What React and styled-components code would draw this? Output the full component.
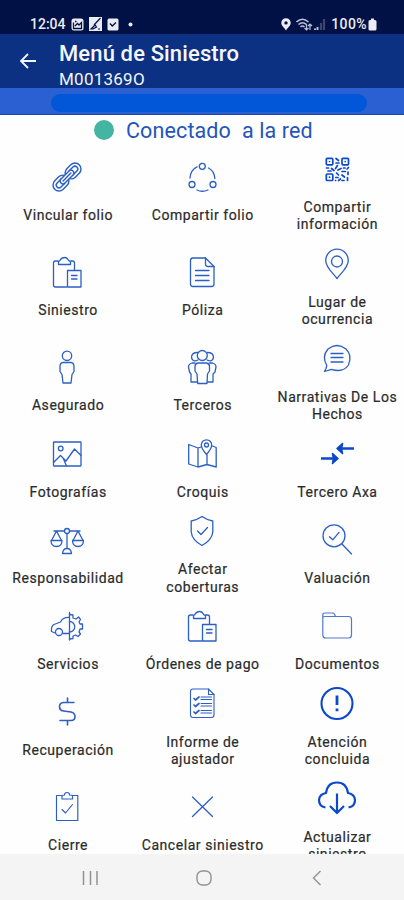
import { styled, createGlobalStyle } from "styled-components";

const GlobalStyle = createGlobalStyle`
    * {
        box-sizing: border-box;
    }
    body {
        margin: 0;
        background-color: white;
        font-family: Roboto, "Liberation Sans", sans-serif;
    }
`

const Screen = styled.div`
    width: 404px;
    height: 900px;
    display: flex;
    flex-direction: column;
    overflow: hidden;
    background-color: #fefefe;
`

const StatusBar = styled.div`
    height: 34px;
    flex-shrink: 0;
    display: flex;
    justify-content: space-between;
    align-items: flex-end;
    padding: 0 27px 2px 30px;
    background-color: #011145;
    color: #e9ecf4;
`

const StatusGroup = styled.div`
    display: flex;
    align-items: center;
    height: 16px;
    gap: ${(props) => props.$gap || '5px'};
`

const StatusText = styled.span`
    font-size: 14px;
    line-height: 16px;
    font-weight: 500;
    letter-spacing: ${(props) => props.$spacing || '0'};
`

const AppBar = styled.header`
    height: 54px;
    flex-shrink: 0;
    display: flex;
    padding-left: 19px;
    background-color: #0c3182;
    color: #f4f6fb;
`

const BackButton = styled.button`
    width: 18px;
    height: 54px;
    padding: 0;
    border: none;
    background: none;
    color: inherit;
    display: flex;
    align-items: center;
`

const Titles = styled.div`
    margin-left: 22px;
    padding-top: 6px;
`

const Title = styled.h1`
    margin: 0;
    font-size: 22px;
    line-height: 27px;
    font-weight: 500;
    letter-spacing: 0.13px;
    white-space: nowrap;
`

const Subtitle = styled.p`
    margin: 0;
    font-size: 17px;
    line-height: 25px;
    letter-spacing: 0.25px;
`

const Strip = styled.div`
    height: 27px;
    flex-shrink: 0;
    padding: 6px 37px 0 51px;
    background-color: #2a60d1;
    border-bottom: 1px solid #1747a8;
`

const StripPill = styled.div`
    height: 18px;
    border-radius: 9px;
    background-color: #0256d8;
`

const Connection = styled.div`
    height: 28px;
    flex-shrink: 0;
    display: flex;
    align-items: center;
    padding: 4px 0 0 94px;
    gap: 12px;
    color: #2455bb;
    font-size: 21.5px;
    line-height: 24px;
    letter-spacing: 0.12px;
    white-space: pre;
`

const Dot = styled.span`
    width: 20px;
    height: 20px;
    margin-top: -2px;
    border-radius: 50%;
    background-color: #45b5a3;
`

const Menu = styled.main`
    flex: 1;
    min-height: 0;
    overflow: hidden;
    display: grid;
    grid-template-columns: repeat(3, 1fr);
    align-content: start;
`

const MenuItem = styled.div`
    display: flex;
    flex-direction: column;
    align-items: center;
    justify-content: center;
    padding: 4.5px 0;
    color: ${(props) => (props.$strong ? '#0c48cb' : '#2c5fc3')};
`

const ItemIcon = styled.svg`
    width: 42px;
    height: 42px;
    overflow: visible;
    fill: none;
    stroke: currentColor;
    stroke-width: 1.3;
    stroke-linecap: round;
    stroke-linejoin: round;
`

const ItemLabel = styled.span`
    margin-top: 9.2px;
    padding-left: 1.5px;
    margin-bottom: -0.2px;
    color: #2b2b2b;
    font-size: 14px;
    line-height: 17.5px;
    letter-spacing: 0.55px;
    -webkit-text-stroke: 0.2px #2b2b2b;
    text-align: center;
    white-space: pre;
`

const NavBar = styled.nav`
    height: 46px;
    flex-shrink: 0;
    display: flex;
    align-items: center;
    justify-content: space-between;
    padding: 2px 82px 0 82px;
    background-color: #f4f4f4;
    color: #929292;
`

const clipboardDoc = (
    <>
        <path d="M12 10H9.500Q7.500 10 7.500 12V34Q7.500 36 9.500 36H20.500M25 10H26.500Q28.500 10 28.500 12V19" />
        <path d="M12.500 13.500V10.500Q14 10 14.500 8.500Q16 6.500 18.500 6.500Q21 6.500 22 8.500Q22.500 10 24.500 10.500V13.500Z" />
        <path d="M21.500 19.500H35V36H21.500ZM25.500 24.500H31M25.500 28H31" />
    </>
)

const icons = {
    link: (
        <g transform="rotate(-45 21 21)" strokeWidth="1.450">
            <rect x="3.700" y="15" width="17.500" height="12" rx="6" />
            <rect x="7" y="18.200" width="10.500" height="5.600" rx="2.800" />
            <rect x="20.800" y="15" width="17.500" height="12" rx="6" />
            <rect x="24.500" y="18.200" width="10.500" height="5.600" rx="2.800" />
            <rect x="12.500" y="18.200" width="17" height="5.600" rx="2.800" fill="#fefefe" />
            <path d="M15.500 21H26.500" />
        </g>
    ),
    share: (
        <>
            <circle cx="21.300" cy="10.300" r="3" />
            <circle cx="11" cy="28.500" r="3" />
            <circle cx="32" cy="28.500" r="3" />
            <path d="M9 22Q9.500 14 16 10.800M27.500 12Q33.500 15 33.800 22.500M16 34Q21 36.500 27 34" />
        </>
    ),
    qr: (
        <g strokeWidth="1.700">
            <rect x="10.300" y="10.300" width="6.500" height="6.500" rx="1" />
            <rect x="26" y="10.300" width="6.500" height="6.500" rx="1" />
            <rect x="10.300" y="26" width="6.500" height="6.500" rx="1" />
            <path d="M13.500 13.500H13.600M29.200 13.500H29.300M13.500 29.200H13.600M20 10.500L22.500 12.500M20 15H23M21.500 17.500L19.500 20.500M10.500 20H12.500M12 23H15M15.500 20.500L18 22.500M22 22L25 20.500M27.500 20H29M31 21L32.500 19.500M26 23.500H29.500M32 24V26.500M20.500 25L22.500 27M19.800 29.500H22M22.500 32.500L24.500 31M26 27L28.500 29M31.500 29.500V32.500M26 32.500H28M19.500 32.500H19.600" />
        </g>
    ),
    clipboardDoc,
    doc: (
        <>
            <path d="M24.500 7H12Q9.500 7 9.500 9.500V33Q9.500 35.500 12 35.500H30.500Q33 35.500 33 33V15.500Z" />
            <path d="M24.500 7V13Q24.500 15.500 27 15.500H33M14.500 19.500H28M14.500 24.500H28M14.500 29.500H28" />
        </>
    ),
    pin: (
        <>
            <path d="M21 35.500C17 30 9.700 24.500 9.700 17.500A11.300 11.300 0 0 1 32.300 17.500C32.300 24.500 25 30 21 35.500Z" />
            <circle cx="21" cy="18.500" r="5.500" />
        </>
    ),
    person: (
        <>
            <circle cx="21" cy="9.800" r="4.700" />
            <path d="M17 16.500H25Q28 17 28 20.500V25.500L26 28.500L25 37H17L16 28.500L14 25.500V20.500Q14 17 17 16.500Z" />
        </>
    ),
    people: (
        <>
            <circle cx="21.300" cy="9.500" r="5" />
            <path d="M17 14Q11.500 16.500 10.500 11.500Q10.500 6.500 16.500 6.500M26 14Q31.500 16.500 32.500 11.500Q32.500 6.500 26.500 6.500" />
            <path d="M17 17H25.500Q28.500 17.500 28.500 20.500V25L26.500 28L26 37.500H16.700L16 28L14 25V20.500Q14 17.500 17 17Z" />
            <path d="M14 17H11Q7.500 18 7.500 21L8.500 26L10 28V36H16M28.500 17H31.500Q35 18 35 21L34 26L32 28V36H26.500" />
        </>
    ),
    chat: (
        <>
            <path d="M10 30.500L8.500 33.500L15.500 31.300Q27 35 32.500 27Q36.500 17.500 30 11Q21 4 12 11Q5.500 18.500 10.800 27.500Z" />
            <path d="M15 15.500H27M15 19.500H27M15 24H27" />
        </>
    ),
    photo: (
        <>
            <rect x="7.500" y="9" width="27.500" height="24" rx="0.500" />
            <circle cx="14.700" cy="15.500" r="2.300" />
            <path d="M7.500 29.500L14.500 22.500L20 28L28.500 16L35 22.500M17.500 26L20.500 33" />
        </>
    ),
    map: (
        <>
            <path d="M20 14L17 15L7.700 11.500V31L17 34L26 31.500L35.200 34V14.500L31.500 13M17 15V34M26 22V31.500" />
            <path d="M25.500 21.500Q20.300 15.500 20.300 12A5.200 5.200 0 0 1 30.700 12Q30.700 15.500 25.500 21.500Z" />
            <circle cx="25.500" cy="12" r="2" />
        </>
    ),
    arrows: (
        <g strokeWidth="2.600" strokeLinecap="butt" strokeLinejoin="round">
            <path d="M38 15.500H23M5 25.500H19" />
            <path d="M26.500 10.500L21 15.500L26.500 20.500L25.500 15.500ZM16.500 20.500L22 25.500L16.500 30.500L17.500 25.500Z" fill="currentColor" strokeWidth="1.600" />
        </g>
    ),
    scales: (
        <>
            <circle cx="21" cy="12" r="2.500" />
            <path d="M8 12H18.500M23.500 12H34M21 14.500V29.500M10.500 12L5.500 21.500M10.500 12L15.500 21.500M32 12L27 21.500M32 12L37 21.500" />
            <path d="M5 21.500H16Q16 27.500 10.500 27.500Q5 27.500 5 21.500ZM26.500 21.500H37.500Q37.500 27.500 32 27.500Q26.500 27.500 26.500 21.500ZM16.500 34.500Q17 29.500 21 29.500Q25 29.500 25.500 34.500Z" />
        </>
    ),
    shield: (
        <>
            <path d="M21 6.500Q26 10 31.800 11V22Q31 30 21 35.500Q11 30 10.200 22V11Q16 10 21 6.500Z" />
            <path d="M16.500 21L20 24.500L26.500 17.500" />
        </>
    ),
    search: (
        <>
            <circle cx="18" cy="16.800" r="11" />
            <path d="M26 25L35.500 35M13.500 17.800L16.800 20.800L23 13.300" />
        </>
    ),
    carGear: (
        <>
            <path d="M23.500 7.500V35M23.500 12.500Q17 12 14.500 17L8 19.500Q5 21 5.500 26.500L9 28M17 28.500H23" />
            <circle cx="13" cy="27" r="3.500" />
            <path d="M23.500 9.500L27 10V13L30 14L32.500 12L34.500 14.500L33 17L34 19H36.500V24H34L33 27L34.500 29L32 31.500L29.500 30L27 31V33.500L23.500 34" />
            <path d="M23.500 16.500A5 5 0 0 1 23.500 27" />
        </>
    ),
    folder: (
        <g strokeWidth="1.200" stroke="#5278ca">
            <path d="M6.800 13V10Q6.800 8 8.800 8H17Q18.500 8 19.500 11.500H32.500Q35.500 11.500 35.500 14.500V30Q35.500 33 32.500 33H9.800Q6.800 33 6.800 30V13Q7 11.500 9 11.500H19.500" />
        </g>
    ),
    dollar: (
        <g strokeWidth="1.600">
            <path d="M21.500 7V11.500M21.500 29.500V34M28 11.500H17.500Q13.500 12 13.500 15.500Q13.500 19.500 17.500 20L25 21Q29 22 29 25.500Q29 29.500 25 29.500H14" />
        </g>
    ),
    report: (
        <g strokeWidth="1.100">
            <path d="M27.500 6H12Q9.500 6 9.500 8.500V32Q9.500 34.500 12 34.500H30.500Q33 34.500 33 32V11.500Z" />
            <path d="M27.500 6V11.500H33M20 14H30.500M20 16.500H30.500M20 20.500H30.500M20 23H30.500M20 27.500H30.500M20 30H30.500" />
            <path d="M13 15.500L14.500 17L18 14M13 22L14.500 23.500L18 20.500M13 29L14.500 30.500L18 27.500" strokeWidth="1.700" />
        </g>
    ),
    alert: (
        <g strokeWidth="2.100">
            <circle cx="21" cy="20.500" r="15.500" />
            <path d="M21 12.500V22M21 25.500V28.300" strokeWidth="2.800" strokeLinecap="butt" />
        </g>
    ),
    clipboardCheck: (
        <g strokeWidth="1.150">
            <path d="M15.500 9.500H10.500V34.500H31.800V9.500H26.500" />
            <path d="M16 13V9.500L18.500 9Q18.500 6.500 21 6.500Q23.500 6.500 23.500 9L26.500 9.500V13ZM16 23.500L19.500 27L26.500 18.500" />
        </g>
    ),
    close: <path d="M11.500 11L31.500 30.500M31.500 11L11.500 30.500" />,
    cloud: (
        <g strokeWidth="2.200" strokeLinecap="butt">
            <path d="M9.500 29.500Q3 28.500 3 22Q3.500 16 10 15Q11.500 4.500 21 4.500Q30.500 4.500 32 15Q38.500 16 39 22Q39 28.500 32.500 29.500" />
            <path d="M21 15.500V35M14 28L21 35L28 28" />
        </g>
    ),
}

const menuItems = [
    { icon: 'link', label: 'Vincular folio' },
    { icon: 'share', label: 'Compartir folio' },
    { icon: 'qr', label: 'Compartir\ninformación', strong: true },
    { icon: 'clipboardDoc', label: 'Siniestro' },
    { icon: 'doc', label: 'Póliza' },
    { icon: 'pin', label: 'Lugar de\nocurrencia' },
    { icon: 'person', label: 'Asegurado' },
    { icon: 'people', label: 'Terceros' },
    { icon: 'chat', label: 'Narrativas De Los\nHechos' },
    { icon: 'photo', label: 'Fotografías' },
    { icon: 'map', label: 'Croquis' },
    { icon: 'arrows', label: 'Tercero Axa', strong: true },
    { icon: 'scales', label: 'Responsabilidad' },
    { icon: 'shield', label: 'Afectar\ncoberturas' },
    { icon: 'search', label: 'Valuación' },
    { icon: 'carGear', label: 'Servicios' },
    { icon: 'clipboardDoc', label: 'Órdenes de pago' },
    { icon: 'folder', label: 'Documentos' },
    { icon: 'dollar', label: 'Recuperación' },
    { icon: 'report', label: 'Informe de\najustador' },
    { icon: 'alert', label: 'Atención\nconcluida', strong: true },
    { icon: 'clipboardCheck', label: 'Cierre' },
    { icon: 'close', label: 'Cancelar siniestro' },
    { icon: 'cloud', label: 'Actualizar\nsiniestro', strong: true },
]

export default function App() {
    return (
        <Screen>
            <GlobalStyle />
            <StatusBar>
                <StatusGroup>
                    <StatusText>12:04</StatusText>
                    <svg width="13" height="13" viewBox="0 0 13 13">
                        <rect x="0.500" y="0.500" width="12" height="12" rx="2.500" fill="#e9ecf4" />
                        <path d="M2.500 4.500V10.500H10.500V4.500L8 7L6.500 5.500L4 8M4 3.500H5.500" fill="none" stroke="#011145" strokeWidth="1.300" />
                    </svg>
                    <svg width="13" height="14" viewBox="0 0 13 14">
                        <rect width="13" height="14" fill="#e9ecf4" />
                        <path d="M11.500 1L5 8M2 12L6 8L7.500 10L4 12ZM9 12H11" fill="none" stroke="#011145" strokeWidth="1.200" />
                    </svg>
                    <svg width="12" height="13" viewBox="0 0 12 13">
                        <rect x="0.500" y="0.500" width="11" height="12" rx="1.500" fill="#e9ecf4" />
                        <path d="M3 5.500L5.300 8L9 4.500" fill="none" stroke="#011145" strokeWidth="1.300" />
                    </svg>
                    <svg width="12" height="5" viewBox="0 0 12 5">
                        <circle cx="6.500" cy="2.500" r="2" fill="#e9ecf4" />
                    </svg>
                </StatusGroup>
                <StatusGroup $gap="5px">
                    <svg width="10" height="13" viewBox="0 0 10 13">
                        <path d="M5 12.500C4 10 0.300 8 0.300 4.900A4.700 4.700 0 0 1 9.700 4.900C9.700 8 6 10 5 12.500Z" fill="#e9ecf4" />
                        <circle cx="5" cy="4.900" r="1.700" fill="#011145" />
                    </svg>
                    <svg width="30" height="13" viewBox="0 0 30 13" fill="none" stroke="#b9c0d2" strokeWidth="1.600">
                        <path d="M0.500 4Q6.500 -1.500 12.500 4M2.500 6.500Q6.500 3 10.500 6.500M4.500 9Q6.500 7 8.500 9" />
                        <path d="M10.500 6V12M8.500 10L10.500 12L12.500 10M14 12V6M12 8L14 6L16 8" strokeWidth="1.200" />
                        <path d="M19 12V10.500M21.500 12V9" strokeWidth="2" />
                        <path d="M25 12V5M28 12V1" stroke="#3b476b" strokeWidth="2.200" />
                    </svg>
                    <StatusGroup $gap="1px">
                        <StatusText $spacing="0.4px">100%</StatusText>
                        <svg width="9" height="13" viewBox="0 0 9 13">
                            <path d="M3 0.500H6V2H7Q8.500 2 8.500 3.500V11Q8.500 12.500 7 12.500H2Q0.500 12.500 0.500 11V3.500Q0.500 2 2 2H3Z" fill="#e9ecf4" />
                        </svg>
                    </StatusGroup>
                </StatusGroup>
            </StatusBar>

            <AppBar>
                <BackButton aria-label="Volver">
                    <svg width="18" height="18" viewBox="0 0 18 18" fill="none" stroke="currentColor" strokeWidth="1.800">
                        <path d="M17 9H2.500M9 2L2 9L9 16" />
                    </svg>
                </BackButton>
                <Titles>
                    <Title>Menú de Siniestro</Title>
                    <Subtitle>M001369O</Subtitle>
                </Titles>
            </AppBar>
            <Strip>
                <StripPill />
            </Strip>

            <Connection>
                <Dot />
                <span>{'Conectado  a la red'}</span>
            </Connection>

            <Menu>
                {menuItems.map((item) =>
                    <MenuItem key={item.label} $strong={item.strong}>
                        <ItemIcon viewBox="0 0 42 42">{icons[item.icon]}</ItemIcon>
                        <ItemLabel>{item.label}</ItemLabel>
                    </MenuItem>
                )}
            </Menu>

            <NavBar>
                <svg width="16" height="16" viewBox="0 0 16 16" fill="none" stroke="currentColor" strokeWidth="1.500">
                    <path d="M1.500 1V15M8.500 1V15M15 1V15" />
                </svg>
                <svg width="16" height="16" viewBox="1 0 16 16" overflow="visible" fill="none" stroke="currentColor" strokeWidth="1.400">
                    <rect x="1" y="1" width="14" height="14" rx="5.500" />
                </svg>
                <svg width="10" height="16" viewBox="0 0 10 16" fill="none" stroke="currentColor" strokeWidth="1.400">
                    <path d="M8.500 1L1.500 8L8.500 15" />
                </svg>
            </NavBar>
        </Screen>
    )
}
